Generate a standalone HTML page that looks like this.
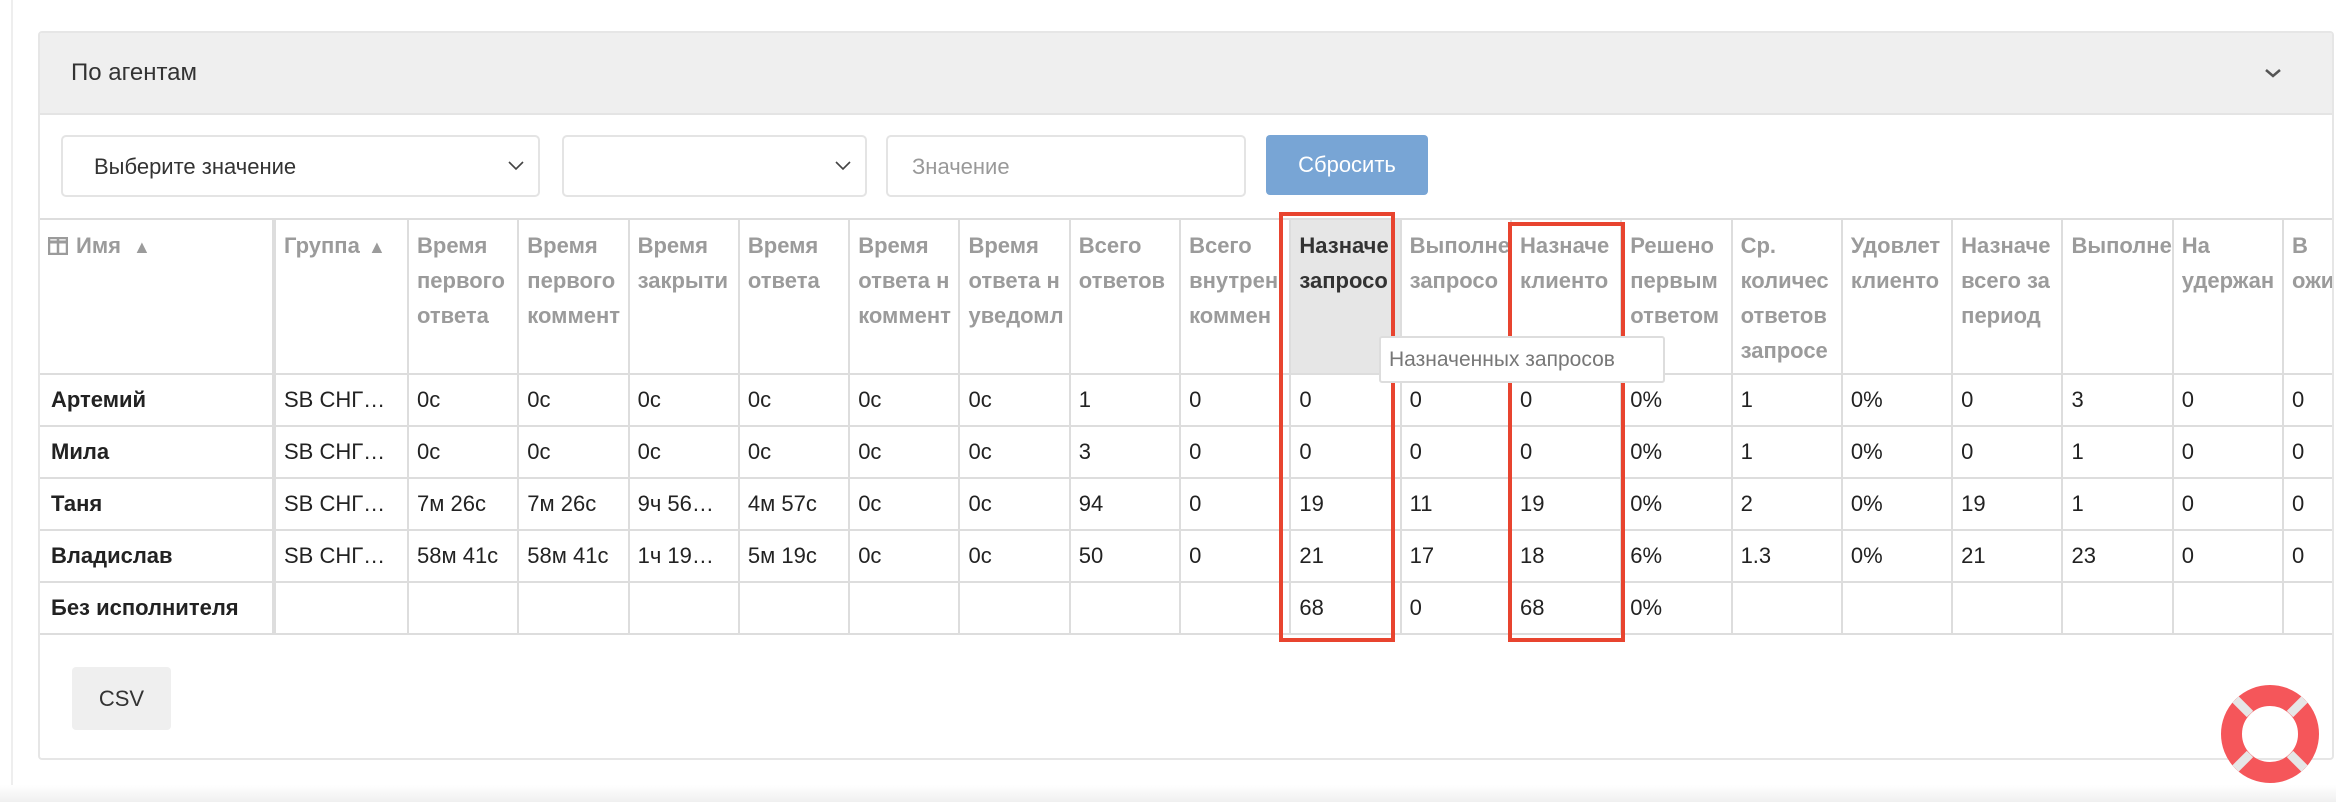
<!DOCTYPE html>
<html><head><meta charset="utf-8"><style>
*{box-sizing:border-box;margin:0;padding:0}
body{width:2336px;height:802px;background:#fff;font-family:"Liberation Sans","Noto Sans CJK SC",sans-serif;position:relative;overflow:hidden}
.pl{position:absolute;left:11px;top:0;width:2px;height:790px;background:#eee}
.bot{position:absolute;left:0;top:785px;width:2336px;height:17px;background:linear-gradient(#fff,#f0f0f0)}
.card{position:absolute;left:38px;top:31px;width:2296px;height:729px;border:2px solid #e6e6e6;border-radius:4px;overflow:hidden;background:#fff}
.hd{height:82px;background:#efefef;border-bottom:2px solid #e4e4e4;font-size:24px;color:#333;padding:26px 0 0 31px}
.chev{position:absolute;right:50px;top:34px}
.sel{position:absolute;top:102px;height:62px;border:2px solid #e4e4e4;border-radius:5px;font-size:22px;color:#333;padding:17px 0 0 31px}
.btn{position:absolute;left:1226px;top:102px;width:162px;height:60px;background:#78a5d5;border-radius:4px;color:#fff;font-size:22px;text-align:center;line-height:60px}
table{position:absolute;left:-2px;top:185px;border-collapse:collapse;table-layout:fixed;width:2354px}
td,th{border:2px solid #ddd;overflow:hidden;white-space:nowrap;text-align:left;vertical-align:top;padding:0 0 0 8px}
th{height:155px;font-size:22px;line-height:35px;color:#9b9b9b;font-weight:bold;padding-top:8px}
td{height:52px;font-size:22px;color:#222;vertical-align:middle}
td.n{font-weight:bold;padding-left:11px;color:#222}
.b3{border-right:4px solid #ddd}
th.hl{background:#e6e6e6;color:#333}
.rb{position:absolute;border:4px solid #e8442f}
.tip{position:absolute;left:1379px;top:336px;width:286px;height:47px;border:2px solid #ddd;border-radius:3px;background:#fff;font-size:21px;color:#777;padding:10px 0 0 8px;white-space:nowrap}
.csv{position:absolute;left:32px;top:634px;width:99px;height:63px;background:#efefef;border-radius:4px;font-size:22px;color:#333;text-align:center;line-height:63px}
</style></head><body>
<div class="pl"></div><div class="bot"></div>
<div class="card">
<div class="hd">По агентам</div>
<svg class="chev" width="18" height="12" viewBox="0 0 18 12"><path d="M2 3 L9 9 L16 3" stroke="#555" stroke-width="2.5" fill="none"/></svg>
<div class="sel" style="left:21px;width:479px">Выберите значение<svg style="position:absolute;right:14px;top:24px" width="16" height="10"><path d="M1 1L8 8L15 1" stroke="#444" stroke-width="1.6" fill="none"/></svg></div>
<div class="sel" style="left:522px;width:305px"><svg style="position:absolute;right:14px;top:24px" width="16" height="10"><path d="M1 1L8 8L15 1" stroke="#444" stroke-width="1.6" fill="none"/></svg></div>
<div class="sel" style="left:846px;width:360px;color:#999;padding-left:24px">Значение</div>
<div class="btn">Сбросить</div>
<table>
<colgroup><col style="width:235px"><col style="width:134px"><col span="18" style="width:110.3px"></colgroup>
<tr>
<th class="b3" style="padding-left:8px"><svg width="20" height="18" style="vertical-align:-2px;margin-right:8px"><rect x="1" y="1" width="18" height="16" fill="none" stroke="#9b9b9b" stroke-width="2.5"/><line x1="10" y1="1" x2="10" y2="17" stroke="#9b9b9b" stroke-width="2.5"/><line x1="1" y1="5" x2="19" y2="5" stroke="#9b9b9b" stroke-width="3"/></svg>Имя <span style="font-size:18px;margin-left:6px">▲</span></th>
<th>Группа <span style="font-size:18px;margin-left:2px">▲</span></th>
<th>Время<br>первого<br>ответа</th>
<th>Время<br>первого<br>коммент</th>
<th>Время<br>закрыти</th>
<th>Время<br>ответа</th>
<th>Время<br>ответа н<br>коммент</th>
<th>Время<br>ответа н<br>уведомл</th>
<th>Всего<br>ответов</th>
<th>Всего<br>внутрен<br>коммен</th>
<th class="hl">Назначе<br>запросо</th>
<th>Выполне<br>запросо</th>
<th>Назначе<br>клиенто</th>
<th>Решено<br>первым<br>ответом</th>
<th>Ср.<br>количес<br>ответов<br>запросе</th>
<th>Удовлет<br>клиенто</th>
<th>Назначе<br>всего за<br>период</th>
<th>Выполне</th>
<th>На<br>удержан</th>
<th>В<br>ожи</th>
</tr>
<tr><td class="n b3">Артемий</td><td>SB СНГ…</td><td>0с</td><td>0с</td><td>0с</td><td>0с</td><td>0с</td><td>0с</td><td>1</td><td>0</td><td>0</td><td>0</td><td>0</td><td>0%</td><td>1</td><td>0%</td><td>0</td><td>3</td><td>0</td><td>0</td></tr>
<tr><td class="n b3">Мила</td><td>SB СНГ…</td><td>0с</td><td>0с</td><td>0с</td><td>0с</td><td>0с</td><td>0с</td><td>3</td><td>0</td><td>0</td><td>0</td><td>0</td><td>0%</td><td>1</td><td>0%</td><td>0</td><td>1</td><td>0</td><td>0</td></tr>
<tr><td class="n b3">Таня</td><td>SB СНГ…</td><td>7м 26с</td><td>7м 26с</td><td>9ч 56…</td><td>4м 57с</td><td>0с</td><td>0с</td><td>94</td><td>0</td><td>19</td><td>11</td><td>19</td><td>0%</td><td>2</td><td>0%</td><td>19</td><td>1</td><td>0</td><td>0</td></tr>
<tr><td class="n b3">Владислав</td><td>SB СНГ…</td><td>58м 41с</td><td>58м 41с</td><td>1ч 19…</td><td>5м 19с</td><td>0с</td><td>0с</td><td>50</td><td>0</td><td>21</td><td>17</td><td>18</td><td>6%</td><td>1.3</td><td>0%</td><td>21</td><td>23</td><td>0</td><td>0</td></tr>
<tr><td class="n b3">Без исполнителя</td><td></td><td></td><td></td><td></td><td></td><td></td><td></td><td></td><td></td><td>68</td><td>0</td><td>68</td><td>0%</td><td></td><td></td><td></td><td></td><td></td><td></td></tr>
</table>
<div class="csv">CSV</div>
</div>
<div class="rb" style="left:1279px;top:212px;width:116px;height:430px"></div>
<div class="rb" style="left:1508px;top:222px;width:117px;height:420px"></div>
<div class="tip">Назначенных запросов</div>
<svg style="position:absolute;left:2220px;top:684px" width="100" height="100" viewBox="0 0 100 100">
<circle cx="50" cy="50" r="38.5" fill="none" stroke="#f5565a" stroke-width="21"/>
<g stroke="#e6e6e6" stroke-width="9"><line x1="15.5" y1="15.5" x2="30" y2="30"/><line x1="84.5" y1="15.5" x2="70" y2="30"/><line x1="15.5" y1="84.5" x2="30" y2="70"/><line x1="84.5" y1="84.5" x2="70" y2="70"/></g>
</svg>
</body></html>
